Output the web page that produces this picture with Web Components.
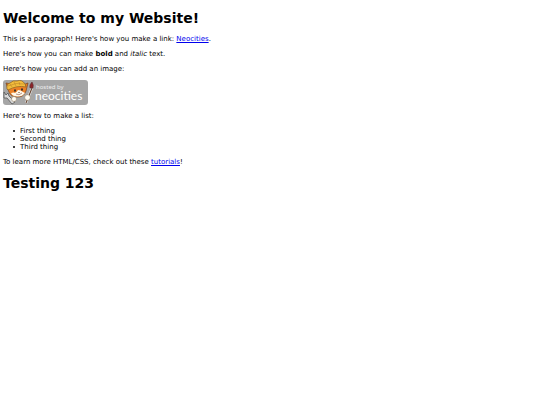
<!DOCTYPE html>
<html lang="en">
<head>
<meta charset="utf-8">
<title>My Website</title>
<style>
html{background:#fff}
body{margin:0;font:7px/8px "DejaVu Sans",Verdana,sans-serif;color:#000}
</style>
</head>
<body>
<site-page>
  <site-heading>Welcome to my Website!</site-heading>
  <site-text>This is a paragraph! Here's how you make a link: <site-link href="https://neocities.org">Neocities</site-link>.</site-text>
  <site-text>Here's how you can make <strong>bold</strong> and <em>italic</em> text.</site-text>
  <site-text>Here's how you can add an image:</site-text>
  <neocities-badge></neocities-badge>
  <site-text>Here's how to make a list:</site-text>
  <site-list></site-list>
  <site-text>To learn more HTML/CSS, check out these <site-link href="https://neocities.org/tutorials">tutorials</site-link>!</site-text>
  <site-heading>Testing 123</site-heading>
</site-page>
<script>
const define = (name, html, setup) => customElements.define(name, class extends HTMLElement {
  constructor() {
    super();
    this.attachShadow({mode: "open"}).innerHTML = html;
  }
  connectedCallback() { if (setup) setup(this); }
});

define("site-page", `<style>:host{display:block}main{display:flex;flex-direction:column;gap:7px;padding:8px 3px}</style><main><slot></slot></main>`);
define("site-heading", `<style>:host{display:block}h1{margin:0;padding:2px 0;font-size:14px;line-height:16px}</style><h1><slot></slot></h1>`);
define("site-text", `<style>:host{display:block}p{margin:0}</style><p><slot></slot></p>`);
define("site-link", `<style>:host{display:inline}a{color:#00e;text-decoration:underline}</style><a><slot></slot></a>`,
  el => { el.shadowRoot.querySelector("a").href = el.getAttribute("href"); });
define("site-list", `<style>:host{display:block}ul{margin:0;padding-left:10px;list-style:none}li{display:flex;align-items:center;gap:5px}li::before{content:"";width:2px;height:2px;border-radius:1px;background:#000}</style><ul><li>First thing</li><li>Second thing</li><li>Third thing</li></ul>`);
define("neocities-badge", `<style>:host{display:block}svg{display:block;width:85px;height:25px}</style>
<svg viewBox="0 0 85 25" role="img" aria-label="Hosted by Neocities">
  <rect width="85" height="25" rx="3" fill="#a6a6a6"/>
  <path d="M5 9L3 3L8 4L20 5L25 3L23 11C21 16 18 17 14 17C9 17 6 14 5 9Z" fill="#ec8126" stroke="#7a431d" stroke-width=".7"/>
  <path d="M15 10Q18 10 20 12L22 13Q19 17 14 16.500Q9 16 8 13Q11 12 12 13Q14 12 15 10Z" fill="#fff8e9"/>
  <path d="M4 9Q3 4 7 3Q10 0 14 1Q19-1 22 4L23 7Q14 5 5 10Z" fill="#f2bd3c" stroke="#8a5c20" stroke-width=".7"/>
  <path d="M7 4L9 7M11 2L13 6M16 2L17 5M5 6Q13 2 21 4" fill="none" stroke="#b57a24" stroke-width=".5"/>
  <ellipse cx="12" cy="10.500" rx=".9" ry="1.300" fill="#302b29"/><ellipse cx="19" cy="9.500" rx=".9" ry="1.300" fill="#302b29"/>
  <path d="M15 12H17L16 13Z" fill="#533326"/><path d="M13 14Q16 16 19 13" fill="none" stroke="#8c5140" stroke-width=".6"/>
  <path d="M1 12L3 15L5 13L6 16L12 22L9 24L4 18L1 18Z" fill="#d8d8d8" stroke="#555" stroke-width=".8"/>
  <path d="M29 8L23 23" fill="none" stroke="#eee" stroke-width="2.200"/><path d="M29 8L23 23" fill="none" stroke="#66432f" stroke-width="1.100"/>
  <path d="M27 8Q26 5 29 2Q31 5 30 8Z" fill="#8f2328" stroke="#573238" stroke-width=".6"/>
  <circle cx="11" cy="19" r="2.500" fill="#fffdf4" stroke="#8b7559" stroke-width=".5"/><circle cx="24.500" cy="17.500" r="2.800" fill="#fffdf4" stroke="#8b7559" stroke-width=".5"/>
  <text x="33" y="9" font-family="'Noto Sans',sans-serif" font-size="6" fill="#eee">hosted by</text>
  <text x="32" y="20" font-family="Lato,sans-serif" font-size="12" fill="#fff">neocities</text>
</svg>`);
</script>
</body>
</html>
